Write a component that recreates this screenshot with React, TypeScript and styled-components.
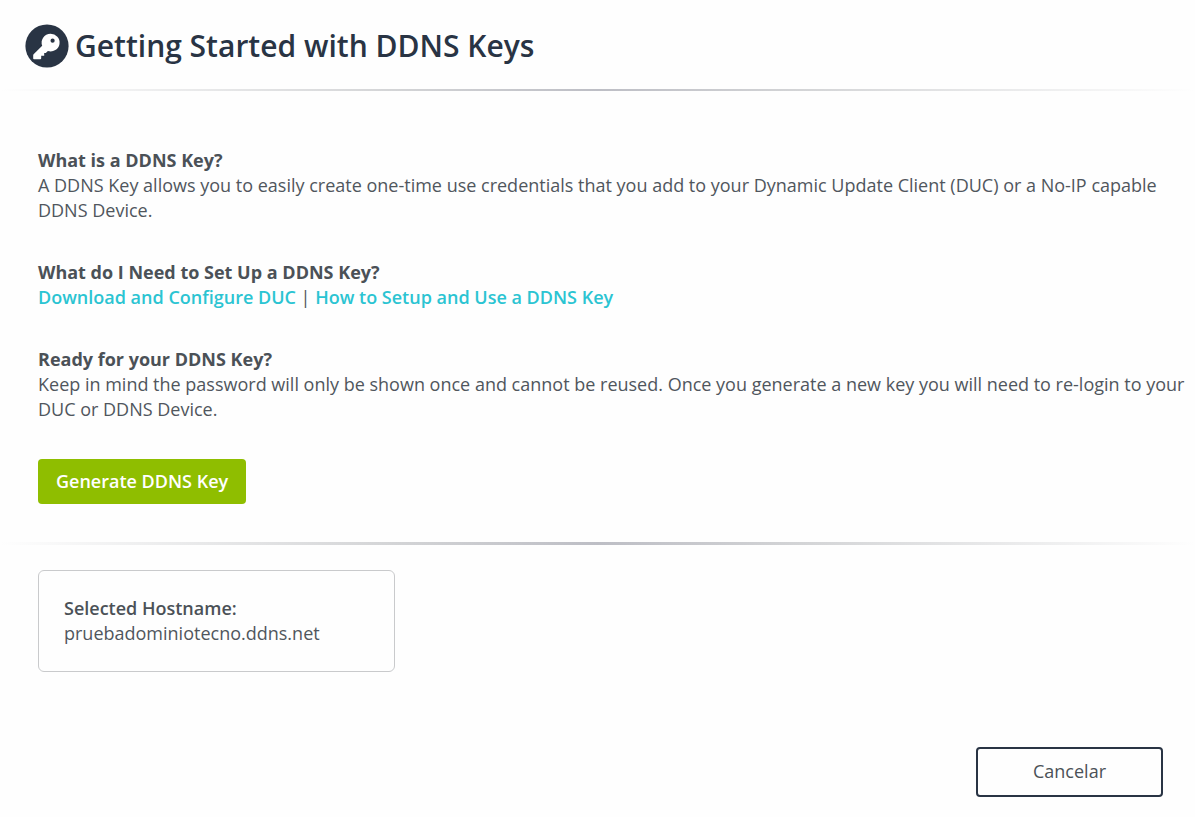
import React from "react";
import styled, { createGlobalStyle } from "styled-components";

const GlobalStyle = createGlobalStyle`
  *, *::before, *::after { box-sizing: border-box; }
  body {
    margin: 0;
    background: #fefefe;
    color: #50565d;
    font-family: "Open Sans", "Noto Sans", sans-serif;
    font-size: 18px;
    line-height: 25px;
  }
  p, h1, h2 { margin: 0; }
`;

const Header = styled.header`
  display: flex;
  align-items: center;
  gap: 6px;
  padding: 24px 25px 21px;
`;

const KeyBadge = styled.svg`
  flex: none;
  width: 44px;
  height: 44px;
`;

const Title = styled.h1`
  color: #293444;
  font-size: 30px;
  font-weight: 600;
  line-height: 44px;
`;

const Divider = styled.div<{ $thickness: number }>`
  height: ${({ $thickness }) => $thickness}px;
  background: linear-gradient(to right, transparent, #d3d4d6 33%, #bdbec5 50%, #d3d4d6 67%, transparent);
`;

const Content = styled.main`
  display: flex;
  flex-direction: column;
  align-items: flex-start;
  gap: 37px;
  padding: 57px 8px 38px 38px;
`;

const Heading = styled.h2<{ $weight: number }>`
  color: #4b5157;
  font-size: 18px;
  font-weight: ${({ $weight }) => $weight};
  line-height: 25px;
`;

const TextLink = styled.a`
  color: #2bc4d2;
  font-weight: 600;
  text-decoration: none;
`;

const Button = styled.button`
  border: 0;
  border-radius: 4px;
  font: inherit;
  cursor: pointer;
`;

const PrimaryButton = styled(Button)`
  padding: 10px 18px;
  background: #8fbe00;
  color: #fff;
  font-weight: 600;
`;

const OutlineButton = styled(Button)`
  min-width: 187px;
  padding: 10px 20px 11px;
  border: 2px solid #293444;
  background: transparent;
  color: #4b5157;
  font-weight: 500;
`;

const Host = styled.div`
  padding: 25px 38px 0;
`;

const HostCard = styled.section`
  max-width: 357px;
  padding: 25px;
  border: 1px solid #c9cacc;
  border-radius: 6px;
`;

const Footer = styled.footer`
  display: flex;
  justify-content: flex-end;
  padding: 75px 32px 20px;
`;

export default function App() {
  return (
    <>
      <GlobalStyle />
      <Header>
        <KeyBadge viewBox="0 0 44 44" aria-hidden="true">
          <circle cx="22" cy="22" r="21.6" fill="#293444" />
          <path
            fill="#fff"
            fillRule="evenodd"
            d="M25.5 9.8a9 8.8 0 1 1-2.6 17.2l-2.1 1.9h-1.6v2.8h-3v2.6q0 .9-.9.9H9q-.8 0-.8-.8v-3.2q0-.5.4-.9l8.6-8.5A9 8.8 0 0 1 25.5 9.8zM27.6 14.6a2.1 2.1 0 1 0 0 4.2 2.1 2.1 0 1 0 0-4.2z"
          />
        </KeyBadge>
        <Title>Getting Started with DDNS Keys</Title>
      </Header>
      <Divider $thickness={2} />
      <Content>
        <section>
          <Heading $weight={700}>What is a DDNS Key?</Heading>
          <p>
            A DDNS Key allows you to easily create one-time use credentials that you add to your
            Dynamic Update Client (DUC) or a No-IP capable DDNS Device.
          </p>
        </section>
        <section>
          <Heading $weight={700}>What do I Need to Set Up a DDNS Key?</Heading>
          <p>
            <TextLink href="#duc">Download and Configure DUC</TextLink> |{" "}
            <TextLink href="#guide">How to Setup and Use a DDNS Key</TextLink>
          </p>
        </section>
        <section>
          <Heading $weight={700}>Ready for your DDNS Key?</Heading>
          <p>
            Keep in mind the password will only be shown once and cannot be reused. Once you
            generate a new key you will need to re-login to your DUC or DDNS Device.
          </p>
        </section>
        <PrimaryButton type="button">Generate DDNS Key</PrimaryButton>
      </Content>
      <Divider $thickness={3} />
      <Host>
        <HostCard>
          <Heading $weight={600}>Selected Hostname:</Heading>
          <p>pruebadominiotecno.ddns.net</p>
        </HostCard>
      </Host>
      <Footer>
        <OutlineButton type="button">Cancelar</OutlineButton>
      </Footer>
    </>
  );
}
